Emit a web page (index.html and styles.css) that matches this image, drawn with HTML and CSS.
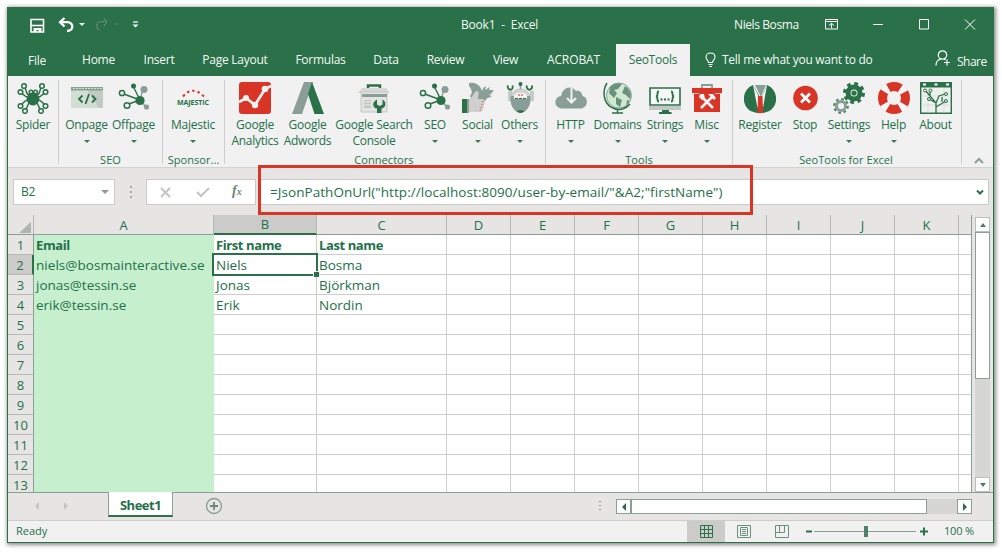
FILE: index.html
```
<!DOCTYPE html>
<html lang="en">
<head>
<meta charset="utf-8">
<title>Book1 - Excel</title>
<link rel="stylesheet" href="styles.css">
</head>
<body>
<svg width="0" height="0" class="defs">
  <defs>
    <symbol id="network" viewBox="0 0 32 32">
      <path d="M3 11L22 18M8 23L22 18M15 4L22 18" stroke="#2a7048" stroke-width="1.4"/>
      <path d="M25 7L22 18L28 25" stroke="#8a9e98" stroke-width="1.4" fill="none"/>
      <circle cx="4" cy="11" r="2.6" fill="#f1f1f1" stroke="#2a7048" stroke-width="1.5"/>
      <circle cx="9" cy="23.500" r="2.800" fill="#f1f1f1" stroke="#2a7048" stroke-width="1.500"/>
      <circle cx="15.500" cy="4" r="2.500" fill="#2a7048"/>
      <circle cx="26" cy="7.500" r="3.500" fill="#8a9e98"/>
      <circle cx="28.500" cy="25" r="2.600" fill="#8a9e98"/>
      <circle cx="22" cy="18.500" r="4.600" fill="#2a7048"/>
    </symbol>
  </defs>
</svg>
<div class="window">
  <header class="titlebar">
    <div class="quick">
      <svg width="120" height="20" viewBox="0 0 120 20" fill="none">
        <path d="M1 3.500h12.500v12.500H1z" stroke="#fff" stroke-width="1.600"/>
        <path d="M1 9.500h12.500" stroke="#fff" stroke-width="1.600"/><path d="M3.500 12h8v4h-3v-2h-2v2h-3z" fill="#fff"/>
        <path d="M34.500 2L30 6.200L34.500 10.500M30.500 6.200H37.500C44 6.200 44 15 37 15" stroke="#fff" stroke-width="2.300"/>
        <path d="M49 7h6l-3 3z" fill="#e9f3ec"/>
        <path d="M74 3l3 3l-3.500 4M76.500 5.500h-5c-6 0-6 6-2 9" stroke="#7d9b8a" stroke-width="1.200" stroke-dasharray="1.500 1"/>
        <path d="M85 8h4" stroke="#7d9b8a" stroke-dasharray="1 1"/>
        <path d="M103 6h5" stroke="#fff" stroke-width="1.200"/><path d="M102.500 8.500h6l-3 3z" fill="#fff"/>
      </svg>
    </div>
    <span class="title">Book1&nbsp; -&nbsp; Excel</span>
    <span class="user">Niels Bosma</span>
    <svg class="controls" width="151" height="12" viewBox="0 0 151 12" fill="none" stroke="#fff">
      <path d="M.5.500h12v9.500H.5zM.5 2.500h12M6.500 9V4.500M4 6.500l2.500-2.200L9 6.500M48 5.500h10M94.500.500h9v9.500h-9zM140 .500l10 10M150 .500l-10 10"/>
    </svg>
  </header>
  <nav class="tabs">
    <span class="tab file">File</span><span class="tab home">Home</span><span class="tab insert">Insert</span><span class="tab layout">Page Layout</span><span class="tab formulas">Formulas</span><span class="tab data">Data</span><span class="tab review">Review</span><span class="tab view">View</span><span class="tab acrobat">ACROBAT</span><span class="tab active">SeoTools</span>
    <svg class="bulb" width="11" height="16" viewBox="0 0 11 16" fill="none" stroke="#fff" stroke-width="1.100"><path d="M3.500 10.500C3.500 8.500 1 7.500 1 5C1 2.500 3 1 5.500 1S10 2.500 10 5c0 2.500-2.500 3.500-2.500 5.500zM3.500 12.500h4M4 14.500h3"/></svg>
    <span class="tell">Tell me what you want to do</span>
    <svg class="person" width="16" height="17" viewBox="0 0 16 17" fill="none" stroke="#fff" stroke-width="1.200"><circle cx="7.500" cy="5" r="4.200"/><path d="M1 15.500c0-4 2-6 5-6.500M9 9l1.500 1M12 9.500v6M9 12.500h6"/></svg>
    <span class="share">Share</span>
  </nav>
  <section class="ribbon">
    <div class="group g-spider">
      <div class="tools">
        <div class="tool">
          <svg class="icon" viewBox="0 0 32 32" fill="none" stroke="#2a7048" stroke-width="1.500"><path d="M12 13C8 12 10 6 7 5M12 15C8 16 7 12 4 11M12 18C8 17 7 21 4 23M13 20C10 22 11 26 8 28M20 13c4-1 2-7 5-8M20 15c4 1 5-3 8-4M20 18c4-1 5 3 8 5M19 20c3 2 2 6 5 8"/><circle cx="16" cy="17" r="5.700" fill="#2a7048"/><circle cx="14" cy="10" r="1.800"/><circle cx="18.500" cy="10" r="1.800"/><g fill="#f1f1f1"><circle cx="7" cy="4" r="2.300"/><circle cx="3.500" cy="10" r="2.300"/><circle cx="3.500" cy="24" r="2.300"/><circle cx="8" cy="29" r="2.300"/><circle cx="25" cy="4" r="2.300"/><circle cx="28.500" cy="10" r="2.300"/><circle cx="28.500" cy="24" r="2.300"/><circle cx="24" cy="29" r="2.300"/></g></svg>
          <span class="label">Spider</span>
        </div>
      </div>
    </div>
    <div class="group g-seo">
      <div class="tools">
        <div class="tool w47">
          <svg class="icon" viewBox="0 0 32 32"><path d="M0 5h32v21H0z" fill="#d4dfd4"/><path d="M16 8l12 18H32V8z" fill="#c3c9c3"/><path d="M0 5h32v3.500H0z" fill="#8a9e98"/><path d="M2 6.500h30" stroke="#cbeacd" stroke-dasharray="2 1"/><path d="M11.500 13.500L8 17l3.500 3.500M21 13.500l3.500 3.500l-3.500 3.500M18 12l-3.500 10" fill="none" stroke="#2a7048" stroke-width="1.800"/></svg>
          <span class="label">Onpage</span><i class="caret"></i>
        </div>
        <div class="tool w47">
          <svg class="icon"><use href="#network"/></svg>
          <span class="label">Offpage</span><i class="caret"></i>
        </div>
      </div>
      <div class="caption">SEO</div>
    </div>
    <div class="group g-sponsor">
      <div class="tools">
        <div class="tool w60">
          <svg class="icon" viewBox="0 0 32 32"><path d="M6 14.500Q15.500 3 27 14.500" fill="none" stroke="#d93526" stroke-width="2" stroke-dasharray="2.500 3"/><text x="0" y="22.500" class="majestic" textLength="32">MAJESTIC</text></svg>
          <span class="label">Majestic</span><i class="caret"></i>
        </div>
      </div>
      <div class="caption">Sponsor...</div>
    </div>
    <div class="group g-connect">
      <div class="tools">
        <div class="tool w56">
          <svg class="icon" viewBox="0 0 32 32"><rect width="32" height="32" rx="3" fill="#d93526"/><path d="M0 20L7 16L16 23L26 7L32 4" fill="none" stroke="#f1f1f1" stroke-width="2.800"/><g fill="#f1f1f1"><circle cx="7" cy="16" r="3"/><circle cx="16" cy="23" r="3.200"/><circle cx="26" cy="7" r="3.300"/></g></svg>
          <span class="label">Google<br>Analytics</span>
        </div>
        <div class="tool w49">
          <svg class="icon" viewBox="0 0 32 32"><path d="M12 0h9L10 32H0z" fill="#8a9e98"/><path d="M16 12L20 0l12 32H22.500z" fill="#2a7048"/></svg>
          <span class="label">Google<br>Adwords</span>
        </div>
        <div class="tool w84">
          <svg class="icon" viewBox="0 0 32 32"><path d="M10 7V3.500h12V7" fill="none" stroke="#2a7048" stroke-width="2.500"/><path d="M0 11l4-5h24l4 5z" fill="#d7d7d5"/><path d="M3 10h26v20H3z" fill="#e3e4e2" stroke="#c3c7c4"/><path d="M4 12h25v3H4z" fill="#8a9e98"/><path d="M6 18h7v8H6z" fill="#bfc5c1"/><path d="M6 20h7M6 23h7" stroke="#f1f1f1"/><path d="M19 17.500c-6 3-4 9 0 9V31h4.500v-4.500c5-1 5-7 1-9v5l-2.700 1.500L19 22.500z" fill="#2a7048"/></svg>
          <span class="label">Google Search<br>Console</span>
        </div>
        <div class="tool w38">
          <svg class="icon"><use href="#network"/></svg>
          <span class="label">SEO</span><i class="caret"></i>
        </div>
        <div class="tool w47">
          <svg class="icon" viewBox="0 0 32 32"><path d="M7 1c5-1 11 1 13 8c1-3 2-4 4-5l-1 4l5-3l-1 3l5 0c-2 2-2 4-5 5l3 1c-2 1-3 2-5 2c-2 5-9 6-14 4l-3-6c3-3 2-6-1-10z" fill="#8a9e98"/><path d="M6 18c5-2 6-9 9-9c3 1 1 5 1 8h5c2 1 2 4 1 6c0 4-2 7-4 7H6z" fill="#cfcfcd"/><path d="M0 17h5v14H0z" fill="#2a7048"/><path d="M5 17h2v14H5z" fill="#8a9e98"/><path d="M21 19l-3 10" stroke="#d93526" stroke-dasharray="1 2"/></svg>
          <span class="label">Social</span><i class="caret"></i>
        </div>
        <div class="tool w37">
          <svg class="icon" viewBox="0 0 32 32"><path d="M4 9h4v10H4zM26 9h4v10h-4z" fill="#c6cbc8"/><path d="M4 3.500c-1 2 1 5 3.500 4c1.500-1 1.500-2 1-4M23 3.500c-1 2 1 5 3.500 4c1.500-1 2-2 1.500-4" fill="none" stroke="#2a7048" stroke-width="1.800"/><path d="M16.500 3v6" stroke="#8a9e98" stroke-width="1.500"/><circle cx="16.500" cy="2" r="2" fill="#2a7048"/><path d="M7 16C7 4 26 4 26 16z" fill="#d0d3d1" stroke="#aab5af" stroke-width=".6"/><path d="M7 14h19c2 7-2 16-9.500 17C9 30 5 21 7 14z" fill="#8a9e98"/><path d="M10 13.500c1-4 12-4 13 0v3.500H10z" fill="#f1f1f1"/><path d="M14 13h6" stroke="#d93526" stroke-dasharray="2 1"/><path d="M11 16.500h11" stroke="#2a7048" stroke-dasharray="3 1"/><path d="M12.500 29c2-1 6-1 8 0c-2 2.500-6 2.500-8 0z" fill="#2a7048"/></svg>
          <span class="label">Others</span><i class="caret"></i>
        </div>
      </div>
      <div class="caption">Connectors</div>
    </div>
    <div class="group g-tools">
      <div class="tools">
        <div class="tool w41">
          <svg class="icon" viewBox="0 0 32 32"><path d="M6 26.500C-2 25 -1 15 6 14C8 5 16 3 21 9c4-1 6 2 6.500 5c6 1 6 11-1 12.500z" fill="#8a9e98"/><path d="M16.500 6v14M12 16l4.500 4.500L21 16" fill="none" stroke="#f1f1f1" stroke-width="2"/></svg>
          <span class="label">HTTP</span><i class="caret"></i>
        </div>
        <div class="tool w53">
          <svg class="icon" viewBox="0 0 32 32"><circle cx="17" cy="13.500" r="12.500" fill="#cfe9d2" stroke="#8a9e98"/><path d="M8 5c4-4 8-4 12-3l-4 5l-4 1l3 3l-3 5l-5-5zM23 4c5 3 7 8 5 13l-4-4l-4-2zM14 15l6 3l-2 7l-4-3zM25 18l3 1l-4 5z" fill="#69927b"/><path d="M5 1C0 9 1 22 11 26c6 3 13 1 17-4M15.500 27v3.500M10 31h11" fill="none" stroke="#2a7048" stroke-width="1.500"/></svg>
          <span class="label">Domains</span><i class="caret"></i>
        </div>
        <div class="tool w42">
          <svg class="icon" viewBox="0 0 32 32"><path d="M1 6h30v17H1z" fill="#f5f6f5" stroke="#2a7048" stroke-width="1.600"/><path d="M0 24h32v4H0z" fill="#c3c8c4"/><path d="M13 28h7v2h2.500v2H10v-2h3z" fill="#2a7048"/><path d="M10 9.500c-3 0 0 4.500-3 5c3 .5 0 5 3 5M22 9.500c3 0 0 4.500 3 5c-3 .5 0 5-3 5M11.500 17.500h2M15 17.500h2M18.500 17.500h2" fill="none" stroke="#2a7048" stroke-width="1.800"/></svg>
          <span class="label">Strings</span><i class="caret"></i>
        </div>
        <div class="tool w41">
          <svg class="icon" viewBox="0 0 32 32"><path d="M11 6V3h10v3" fill="none" stroke="#8a9e98" stroke-width="1.800"/><path d="M1 6h30v5.500H29V30H3V11.500H1z" fill="#d93526"/><path d="M1 11.500h7M24 11.500h7" stroke="#f1f1f1" stroke-width=".7"/><path d="M11.500 15.500l10.500 10.500M21 15L10 26" stroke="#f4f4f4" stroke-width="2.600"/><path d="M9 12l4 0l1 5l-3 1l-3-3zM17 12l5 0l3 4l-2 2l-3-3z" fill="#f4f4f4"/></svg>
          <span class="label">Misc</span><i class="caret"></i>
        </div>
      </div>
      <div class="caption">Tools</div>
    </div>
    <div class="group g-excel">
      <div class="tools">
        <div class="tool w46">
          <svg class="icon" viewBox="0 0 32 32"><path d="M9 3C-3 8-3 25 8 29.500Q16 33 24 29.500C35 25 35 8 23 3l-6 14z" fill="#2a7048"/><path d="M9 3l7 14l-2.500 9zM23 3l-6 14l2 9z" fill="#f4f4f4"/><path d="M11 3h11l-5 12z" fill="#8a9e98"/><path d="M14 14h4.500l.5 17h-5.500z" fill="#d93526"/></svg>
          <span class="label">Register</span>
        </div>
        <div class="tool w44">
          <svg class="icon" viewBox="0 0 32 32"><circle cx="16.500" cy="16" r="12.300" fill="#d93526"/><path d="M12 11.500l9 9M21 11.500l-9 9" stroke="#fff" stroke-width="2.800"/></svg>
          <span class="label">Stop</span>
        </div>
        <div class="tool w44">
          <svg class="icon" viewBox="0 0 32 32" fill="none"><circle cx="21" cy="11" r="6" stroke="#2a7048" stroke-width="5"/><circle cx="21" cy="11" r="9.300" stroke="#2a7048" stroke-width="3.400" stroke-dasharray="3.650 3.650"/><circle cx="21" cy="11" r="2.600" fill="#2a7048"/><circle cx="8" cy="24" r="4.600" stroke="#8a9e98" stroke-width="3"/><circle cx="8" cy="24" r="6.900" stroke="#53836a" stroke-width="2" stroke-dasharray="2.710 2.710"/></svg>
          <span class="label">Settings</span><i class="caret"></i>
        </div>
        <div class="tool w45">
          <svg class="icon" viewBox="0 0 32 32" fill="none"><circle cx="16" cy="16" r="11.500" stroke="#d93526" stroke-width="9"/><circle cx="16" cy="16" r="11.500" stroke="#f6f6f6" stroke-width="9.500" stroke-dasharray="5.500 12.564" stroke-dashoffset="-6.300"/></svg>
          <span class="label">Help</span><i class="caret"></i>
        </div>
        <div class="tool w39">
          <svg class="icon" viewBox="0 0 32 32" fill="none"><path d="M.7.700h30.600v30.600H.7z" fill="#eef0ee" stroke="#2a7048" stroke-width="1.400"/><path d="M0 0h32v5.500H0z" fill="#2a7048"/><path d="M3 2.500h3M14.500 2.500h3M26 2.500h3" stroke="#fff" stroke-width="1.800"/><path d="M8 6v25M24 6v25M1 14h30M1 23h30" stroke="#d4d8d5" stroke-width=".7"/><path d="M16 31V21L5 8M16 21L9 17M16 25L26 19M16 21l3-7l6-2M10 14V8M22 20v-5" stroke="#2a7048" stroke-width="1.300"/><g fill="#f1f1f1" stroke="#2a7048"><circle cx="5" cy="8.500" r="1.500"/><circle cx="10.500" cy="8.500" r="1.500"/><circle cx="9" cy="17" r="1.500"/><circle cx="26" cy="12" r="1.500"/><circle cx="26" cy="19" r="1.500"/></g></svg>
          <span class="label">About</span>
        </div>
      </div>
      <div class="caption">SeoTools for Excel</div>
    </div>
    <svg class="collapse" width="10" height="7" viewBox="0 0 10 7" fill="none" stroke="#8a9e98" stroke-width="2"><path d="M1 6l4-4l4 4"/></svg>
  </section>
  <section class="formula-bar">
    <div class="name-box"><span>B2</span><i class="drop"></i></div>
    <div class="grip"></div>
    <div class="fx-box">
      <svg width="109" height="24" viewBox="0 0 109 24" fill="none"><path d="M14 8l9 9M23 8l-9 9M50 12l4 4l8-8" stroke="#c4c4c2" stroke-width="2"/></svg>
      <span class="fx">f<small>x</small></span>
    </div>
    <div class="formula"><span class="expr">=JsonPathOnUrl("http://localhost:8090/user-by-email/"&amp;A2;"firstName")</span>
      <svg width="8" height="7" viewBox="0 0 8 7" fill="none" stroke="#2a7048" stroke-width="2"><path d="M1 1.500l3 3l3-3"/></svg>
    </div>
    <div class="highlight"></div>
  </section>
  <section class="sheet">
    <table class="cells">
      <colgroup><col class="c-head"><col class="c-a"><col class="c-b"><col class="c-c"><col class="c-n"><col class="c-n"><col class="c-n"><col class="c-n"><col class="c-n"><col class="c-n"><col class="c-n"><col class="c-n"><col class="c-last"></colgroup>
      <thead><tr><th class="corner"><svg width="12" height="11" viewBox="0 0 12 11"><path d="M12 0v11H0z" fill="#adb5b0"/></svg></th><th>A</th><th class="sel">B</th><th>C</th><th>D</th><th>E</th><th>F</th><th>G</th><th>H</th><th>I</th><th>J</th><th>K</th><th></th></tr></thead>
      <tbody>
      <tr class="bold"><th>1</th><td>Email</td><td>First name</td><td>Last name</td><td><td><td><td><td><td><td><td><td></tr>
      <tr><th class="sel">2</th><td class="mail">niels@bosmainteractive.se</td><td class="cursor">Niels</td><td>Bosma</td><td><td><td><td><td><td><td><td><td></tr>
      <tr><th>3</th><td>jonas@tessin.se</td><td>Jonas</td><td>Björkman</td><td><td><td><td><td><td><td><td><td></tr>
      <tr><th>4</th><td>erik@tessin.se</td><td>Erik</td><td>Nordin</td><td><td><td><td><td><td><td><td><td></tr>
      <tr><th>5</th><td><td><td><td><td><td><td><td><td><td><td><td></tr>
      <tr><th>6</th><td><td><td><td><td><td><td><td><td><td><td><td></tr>
      <tr><th>7</th><td><td><td><td><td><td><td><td><td><td><td><td></tr>
      <tr><th>8</th><td><td><td><td><td><td><td><td><td><td><td><td></tr>
      <tr><th>9</th><td><td><td><td><td><td><td><td><td><td><td><td></tr>
      <tr><th>10</th><td><td><td><td><td><td><td><td><td><td><td><td></tr>
      <tr><th>11</th><td><td><td><td><td><td><td><td><td><td><td><td></tr>
      <tr><th>12</th><td><td><td><td><td><td><td><td><td><td><td><td></tr>
      <tr><th>13</th><td><td><td><td><td><td><td><td><td><td><td><td></tr>
      </tbody>
    </table>
    <div class="vscroll">
      <div class="vbtn"><i class="up"></i></div><div class="vthumb"></div><div class="vtrack"></div><div class="vbtn"><i class="down"></i></div>
    </div>
  </section>
  <section class="sheet-tabs">
    <div class="nav-arrows"><i class="left"></i><i class="right"></i></div>
    <div class="sheet-tab">Sheet1</div>
    <svg class="add" width="18" height="18" viewBox="0 0 18 18" fill="none" stroke="#8a9e98"><circle cx="9" cy="9" r="7.500" stroke-width="1.300"/><path d="M5 9h8M9 5v8" stroke="#6c8a7b" stroke-width="1.800"/></svg>
    <div class="split"></div>
    <div class="hscroll"><div class="hbtn"><i class="left"></i></div><div class="hthumb"></div><div class="htrack"></div><div class="hbtn"><i class="right"></i></div></div>
  </section>
  <footer class="status">
    <span class="ready">Ready</span>
    <div class="mode on"><svg width="13" height="13" viewBox="0 0 13 13" fill="none" stroke="#2a7048"><path d="M.5.500h12v12H.5zM4.500 0v13M8.500 0v13M0 4.500h13M0 8.500h13"/></svg></div>
    <div class="mode"><svg width="14" height="13" viewBox="0 0 14 13" fill="none" stroke="#6c9080"><path d="M.5.500h13v12H.5zM3.500 2.500h7v8h-7zM5 4.500h4M5 6.500h4M5 8.500h4"/></svg></div>
    <div class="mode"><svg width="14" height="13" viewBox="0 0 14 13" fill="none" stroke="#6c9080"><path d="M.5.500h13v12H.5zM4.500 .500v7M9.500 .500v7M.5 7.500h9"/></svg></div>
    <svg class="zoom" width="122" height="12" viewBox="0 0 122 12" fill="none"><path d="M0 6.500h6" stroke="#2a7048" stroke-width="2"/><path d="M8 6.500h102" stroke="#8a9e98"/><path d="M58 1h4v11h-4z" fill="#4f8068"/><path d="M114 6.500h8M118 2.500v8" stroke="#2a7048" stroke-width="2"/></svg>
    <span class="percent">100 %</span>
  </footer>
</div>
</body>
</html>
```
FILE: styles.css
```
* { box-sizing: border-box; }
body {
  margin: 0;
  padding: 7px;
  height: 555px;
  background: #fff;
  overflow: hidden;
  font-family: "Open Sans", "Noto Sans", sans-serif;
  color: #24704a;
}
svg { display: block; flex: none; }
.defs { position: absolute; }
.window {
  width: 987px;
  height: 536px;
  border: 1px solid #2a7048;
  background: #e6e5e3;
  box-shadow: 1px 1px 4px 1px rgba(0, 0, 0, .45);
  display: flex;
  flex-direction: column;
  white-space: nowrap;
}
.window > * { flex: none; }

.titlebar {
  height: 36px;
  display: flex;
  background: #2a7048;
  color: #f4faf5;
  font-size: 12px;
  line-height: 34px;
}
.quick { width: 453px; padding: 8px 0 0 22px; }
.title { width: 273px; letter-spacing: -.2px; }
.user { width: 91px; letter-spacing: -.4px; }
.controls { margin-top: 11px; }

.tabs {
  height: 32px;
  display: flex;
  background: #2a7048;
  color: #f4faf5;
  font-size: 12px;
  line-height: 32px;
}
.tab { text-align: center; letter-spacing: -.25px; }
.file { width: 58px; padding-top: 1px; }
.home { width: 65px; }
.insert { width: 56px; }
.layout { width: 96px; }
.formulas { width: 75px; }
.data { width: 56px; }
.review { width: 63px; }
.view { width: 57px; }
.acrobat { width: 79px; letter-spacing: -.1px; }
.active { width: 74px; margin-left: 3px; background: #f1f1f1; color: #24704a; }
.bulb { margin: 8px 6px 0 15px; }
.tell { width: 213px; letter-spacing: -.27px; }
.person { margin: 6px 6px 0 0; }
.share { padding-top: 2px; letter-spacing: -.5px; }

.ribbon { height: 92px; display: flex; background: #f1f1f1; border-bottom: 1px solid #d2d2d0; }
.group {
  margin-top: 4px;
  height: 84px;
  border-right: 1px solid #cdcdcb;
  display: flex;
  flex-direction: column;
}
.g-spider { width: 51px; }
.g-seo { width: 104px; padding-left: 4px; }
.g-sponsor { width: 62px; }
.g-connect { width: 321px; padding-left: 2px; }
.g-tools { width: 187px; padding-left: 4px; }
.g-excel { width: 229px; padding-left: 4px; }
.tools { display: flex; flex: none; height: 72px; padding-top: 2px; }
.tool { width: 50px; display: flex; flex-direction: column; align-items: center; }
.w37 { width: 37px; } .w38 { width: 38px; } .w39 { width: 39px; }
.w41 { width: 41px; } .w42 { width: 42px; } .w44 { width: 44px; }
.w45 { width: 45px; } .w46 { width: 46px; } .w47 { width: 47px; }
.w49 { width: 49px; } .w53 { width: 53px; } .w56 { width: 56px; }
.w60 { width: 60px; } .w84 { width: 84px; }
.icon { width: 32px; height: 32px; }
.majestic { font: bold 7px "Open Sans", sans-serif; fill: #24704a; }
.label { margin-top: 3px; font-size: 12px; line-height: 16px; text-align: center; letter-spacing: -.25px; }
.caret { margin-top: 7px; border: 3px solid transparent; border-top-color: #3d7759; border-bottom: 0; }
.caption { font-size: 11px; line-height: 16px; text-align: center; letter-spacing: .05px; }
.g-seo .caption, .g-tools .caption, .g-excel .caption { margin-left: -4px; }
.g-excel .caption { margin-left: -6px; }
.g-connect .caption { margin-left: -4px; }
.collapse { margin: 81px 0 0 12px; }

.formula-bar { height: 47px; display: flex; padding: 11px 0 0 5px; position: relative; font-size: 13px; }
.name-box, .fx-box, .formula { height: 26px; background: #fff; border: 1px solid #cacac8; line-height: 24px; }
.name-box { width: 102px; padding: 0 10px 0 7px; display: flex; justify-content: space-between; align-items: center; font-size: 12px; letter-spacing: -.2px; }
.drop { border: 4px solid transparent; border-top-color: #8a9e98; border-bottom: 0; margin-right: -5px; }
.grip { width: 2px; height: 12px; margin: 7px 14px 0 15px; background: repeating-linear-gradient(#9eaaa4 0 2px, transparent 2px 5px); }
.fx-box { width: 110px; display: flex; margin-right: 2px; }
.fx-box svg { margin-right: -24px; }
.fx { font: italic bold 14px/21px "Liberation Serif", serif; color: #6b8679; }
.fx small { font-size: 10px; }
.formula { width: 731px; padding: 0 4px 0 11px; display: flex; justify-content: space-between; align-items: center; }
.expr { font-size: 13.500px; letter-spacing: .06px; }
.highlight { position: absolute; left: 250px; top: -3px; width: 495px; height: 50px; border: 3px solid #d93526; }

.sheet { height: 278px; display: flex; overflow: hidden; border-bottom: 1px solid #8a9e98; }
.cells { width: 964px; table-layout: fixed; border-collapse: separate; border-spacing: 0; border-right: 1px solid #8a9e98; flex: none; }
.c-head { width: 26px; } .c-a { width: 180px; } .c-b { width: 103px; } .c-c { width: 130px; }
.c-n { width: 64px; } .c-last { width: 12px; }
.cells tr { height: 20px; }
.cells td, .cells th { height: 20px; padding: 0; line-height: 18px; }
.cells td {
  background: #fff;
  border-right: 1px solid #cdcdcb;
  border-bottom: 1px solid #cdcdcb;
  padding-left: 2px;
  font-size: 13.500px;
}
.cells td:last-child { border-right: 0; }
.cells td:nth-child(2) { background: #c6efce; border-color: #c6efce; }
.cells .mail { letter-spacing: .04px; }
.cells th { font-weight: 400; font-size: 13px; background: #e6e5e3; border-right: 1px solid #b4bbb7; border-bottom: 1px solid #b4bbb7; }
.cells thead th { border-bottom-color: #8a9e98; }
.cells thead th:last-child { border-right: 0; }
.cells tbody th { border-right-color: #8a9e98; }
.cells .corner { padding: 5px 2px 0 11px; }
.cells thead .sel { background: #cbcbc9; border-bottom: 2px solid #2a7048; }
.cells tbody .sel { background: #cbcbc9; border-right: 2px solid #2a7048; }
.cells .bold td { font-size: 13px; font-weight: 700; letter-spacing: -.4px; }
.cells .cursor { position: relative; }
.cursor::before { content: ""; position: absolute; left: -2px; top: -2px; width: 102px; height: 19px; border: 2px solid #2a7048; }
.cursor::after { content: ""; position: absolute; right: -3px; bottom: -3px; width: 5px; height: 5px; background: #2a7048; border: 1px solid #fff; border-width: 1px 0 0 1px; }
.vscroll { width: 15px; margin: 2px 0 0 3px; display: flex; flex-direction: column; }
.vbtn { height: 15px; background: #fff; border: 1px solid #b9c0bc; display: flex; align-items: center; justify-content: center; }
.vthumb { height: 147px; background: #fff; border: 1px solid #8a9e98; }
.vtrack { flex: 1; background: #d6d6d4; }
.up { border: 3px solid transparent; border-bottom: 4px solid #4f7c66; border-top: 0; }
.down { border: 3px solid transparent; border-top: 4px solid #4f7c66; border-bottom: 0; }
.left { border: 4px solid transparent; border-right: 4px solid #2f6a4c; border-left: 0; }
.right { border: 4px solid transparent; border-left: 4px solid #2f6a4c; border-right: 0; }

.sheet-tabs { height: 28px; display: flex; border-bottom: 1px solid #cdcdcb; }
.nav-arrows { width: 100px; display: flex; padding: 9px 0 0 27px; gap: 25px; }
.nav-arrows .left { height: 0; border-right-color: #c3c7c4; }
.nav-arrows .right { height: 0; border-left-color: #c3c7c4; }
.sheet-tab { width: 65px; height: 25px; margin-top: -1px; background: #fff; border: 1px solid #8a9e98; border-top: 0; border-bottom: 2px solid #2a7048; font-weight: 700; font-size: 13px; line-height: 26px; text-align: center; letter-spacing: -.5px; }
.add { margin: 4px 0 0 32px; }
.split { width: 2px; height: 10px; margin: 8px 0 0 376px; background: repeating-linear-gradient(#8a9e98 0 1px, transparent 1px 4px); }
.hscroll { width: 356px; height: 15px; margin: 6px 0 0 15px; display: flex; }
.hbtn { width: 15px; background: #fff; border: 1px solid #8a9e98; display: flex; align-items: center; justify-content: center; }
.hthumb { width: 296px; background: #fff; border: 1px solid #8a9e98; }
.htrack { flex: 1; background: #d6d6d4; }

.status { height: 21px; display: flex; background: #f1f1f1; font-size: 11px; line-height: 19px; }
.ready { width: 679px; padding-left: 8px; }
.mode { width: 38px; display: flex; align-items: center; justify-content: center; }
.on { background: #cbcbc9; }
.zoom { margin: 4px 0 0 5px; }
.percent { margin-left: 16px; letter-spacing: -.2px; }
```
